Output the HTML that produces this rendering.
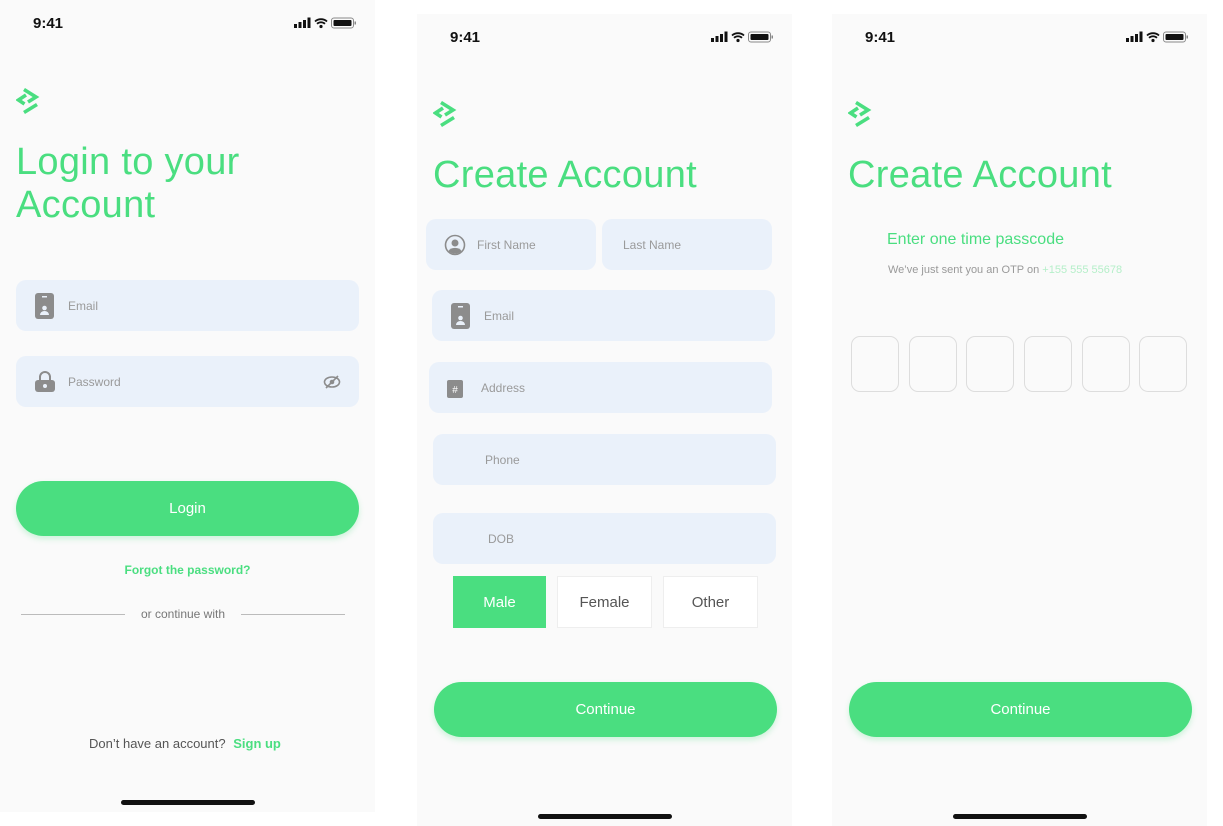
<!DOCTYPE html><html><head><style>
*{margin:0;padding:0;box-sizing:border-box}
body{width:1223px;height:826px;background:#fff;position:relative;overflow:hidden;font-family:"Liberation Sans",sans-serif}
.scr{position:absolute;width:375px;height:812px;background:#fafafa}
.a{position:absolute}
.t{font-weight:bold;font-size:15px;color:#111}
.h{color:#4ade80;font-size:38px;line-height:43px;letter-spacing:0.3px}
.in{position:absolute;background:#eaf1fa;border-radius:10px;height:51px;font-size:12px;color:#9a9a9a;display:flex;align-items:center}
.btn{position:absolute;background:#4ade80;border-radius:28px;height:55px;color:#fff;font-size:15px;display:flex;align-items:center;justify-content:center;box-shadow:0 3px 6px rgba(74,222,128,.25)}
.bar{position:absolute;width:134px;height:5px;border-radius:3px;background:#111}
.otp{position:absolute;width:48px;height:56px;border:1.5px solid #ddd;border-radius:9px}
.g{position:absolute;top:562px;height:52px;width:95px;background:#fff;border:1px solid #eee;font-size:15px;color:#555;display:flex;align-items:center;justify-content:center}
</style></head><body>
<svg width="0" height="0" style="position:absolute"><defs>
<g id="st"><rect x="0" y="7" width="3" height="4" fill="#111"/><rect x="4.5" y="5" width="3" height="6" fill="#111"/><rect x="9" y="3" width="3" height="8" fill="#111"/><rect x="13.5" y="0.5" width="3" height="10.5" fill="#111"/>
<path d="M21 4.5a9 9 0 0 1 12 0M23 6.8a6 6 0 0 1 8 0" stroke="#111" stroke-width="1.8" fill="none"/><circle cx="27" cy="9.5" r="1.6" fill="#111"/>
<rect x="37.5" y="1" width="22" height="10" rx="2.5" fill="none" stroke="#888" stroke-width="1"/><rect x="39.5" y="3" width="18" height="6" rx="1" fill="#111"/><rect x="60.5" y="4.5" width="1.5" height="3" fill="#888"/></g>
<g id="logo" fill="none" stroke="#4ade80" stroke-width="3.6" stroke-linejoin="miter"><path d="M8 1.5L20 9L12 14"/><path d="M10 7L2.5 12L8.5 16"/><path d="M21 16.5L8 24.5"/></g>
</defs></svg>

<div class="scr" style="left:0;top:0">
<div class="a t" style="left:33px;top:15px">9:41</div>
<svg class="a" style="left:294px;top:17px" width="64" height="12"><use href="#st"/></svg>
<svg class="a" style="left:16px;top:88px" width="24" height="28"><use href="#logo"/></svg>
<div class="a h" style="left:16px;top:141px">Login to your<br>Account</div>
<div class="in" style="left:16px;top:280px;width:343px"><svg style="margin-left:19px" width="20" height="26"><rect x="0" y="0" width="19" height="26" rx="3" fill="#8c8c8c"/><rect x="7" y="3" width="5" height="1.5" fill="#eaf1fa"/><circle cx="9.5" cy="15" r="2.3" fill="#eaf1fa"/><path d="M5 22a4.5 4 0 0 1 9 0z" fill="#eaf1fa"/></svg><span style="margin-left:13px">Email</span></div>
<div class="in" style="left:16px;top:356px;width:343px"><svg style="margin-left:18px" width="22" height="22"><path d="M6 9V6a5 5 0 0 1 10 0v3" stroke="#8c8c8c" stroke-width="2" fill="none"/><rect x="1" y="9" width="20" height="12" rx="3" fill="#8c8c8c"/><circle cx="11" cy="15" r="2" fill="#eaf1fa"/></svg><span style="margin-left:12px">Password</span>
<svg class="a" style="right:18px;top:18px" width="18" height="16"><ellipse cx="9" cy="8" rx="7.5" ry="5" fill="none" stroke="#8c8c8c" stroke-width="1.6"/><circle cx="9" cy="8" r="2.3" fill="#8c8c8c"/><path d="M3 14L15 2" stroke="#8c8c8c" stroke-width="1.6"/></svg></div>
<div class="btn" style="left:16px;top:481px;width:343px">Login</div>
<div class="a" style="left:0;width:375px;top:563px;text-align:center;color:#4ade80;font-weight:bold;font-size:12px">Forgot the password?</div>
<div class="a" style="left:21px;top:614px;width:104px;height:1px;background:#bbb"></div>
<div class="a" style="left:241px;top:614px;width:104px;height:1px;background:#bbb"></div>
<div class="a" style="left:125px;width:116px;top:607px;text-align:center;color:#777;font-size:12px">or continue with</div>
<div class="a" style="left:89px;top:736px;font-size:13px;color:#555">Don’t have an account? <b style="color:#4ade80;margin-left:4px">Sign up</b></div>
<div class="bar" style="left:121px;top:800px"></div>
</div>

<div class="scr" style="left:417px;top:14px">
<div class="a t" style="left:33px;top:15px">9:41</div>
<svg class="a" style="left:294px;top:17px" width="64" height="12"><use href="#st"/></svg>
<svg class="a" style="left:16px;top:87px" width="24" height="28"><use href="#logo"/></svg>
<div class="a h" style="left:16px;top:140px">Create Account</div>
<div class="in" style="left:9px;top:205px;width:170px"><svg style="margin-left:18px" width="22" height="22"><circle cx="11" cy="11" r="9.5" fill="none" stroke="#8c8c8c" stroke-width="1.6"/><circle cx="11" cy="9" r="3.5" fill="#8c8c8c"/><path d="M4.5 17a7 5 0 0 1 13 0a9 9 0 0 1-13 0z" fill="#8c8c8c"/></svg><span style="margin-left:11px">First Name</span></div>
<div class="in" style="left:185px;top:205px;width:170px"><span style="margin-left:21px">Last Name</span></div>
<div class="in" style="left:15px;top:276px;width:343px"><svg style="margin-left:19px" width="20" height="26"><rect x="0" y="0" width="19" height="26" rx="3" fill="#8c8c8c"/><rect x="7" y="3" width="5" height="1.5" fill="#eaf1fa"/><circle cx="9.5" cy="15" r="2.3" fill="#eaf1fa"/><path d="M5 22a4.5 4 0 0 1 9 0z" fill="#eaf1fa"/></svg><span style="margin-left:13px">Email</span></div>
<div class="in" style="left:12px;top:348px;width:343px"><svg style="margin-left:18px" width="16" height="20"><rect x="0" y="2" width="16" height="18" rx="2" fill="#8c8c8c"/><text x="8" y="15" font-size="10" fill="#fff" text-anchor="middle" font-family="Liberation Sans">#</text></svg><span style="margin-left:18px">Address</span></div>
<div class="in" style="left:16px;top:420px;width:343px"><span style="margin-left:52px">Phone</span></div>
<div class="in" style="left:16px;top:499px;width:343px"><span style="margin-left:55px">DOB</span></div>
<div class="g" style="left:36px;background:#4ade80;color:#fff;border-color:#4ade80;width:93px">Male</div>
<div class="g" style="left:140px">Female</div>
<div class="g" style="left:246px">Other</div>
<div class="btn" style="left:17px;top:668px;width:343px">Continue</div>
<div class="bar" style="left:121px;top:800px"></div>
</div>

<div class="scr" style="left:832px;top:14px">
<div class="a t" style="left:33px;top:15px">9:41</div>
<svg class="a" style="left:294px;top:17px" width="64" height="12"><use href="#st"/></svg>
<svg class="a" style="left:16px;top:87px" width="24" height="28"><use href="#logo"/></svg>
<div class="a h" style="left:16px;top:140px">Create Account</div>
<div class="a" style="left:55px;top:217px;font-size:16px;color:#4ade80">Enter one time passcode</div>
<div class="a" style="left:56px;top:250px;font-size:11px;color:#999">We’ve just sent you an OTP on <span style="color:#b5efc9">+155 555 55678</span></div>
<div class="otp" style="left:19px;top:322px"></div><div class="otp" style="left:77px;top:322px"></div><div class="otp" style="left:134px;top:322px"></div><div class="otp" style="left:192px;top:322px"></div><div class="otp" style="left:250px;top:322px"></div><div class="otp" style="left:307px;top:322px"></div>
<div class="btn" style="left:17px;top:668px;width:343px">Continue</div>
<div class="bar" style="left:121px;top:800px"></div>
</div>
</body></html>
